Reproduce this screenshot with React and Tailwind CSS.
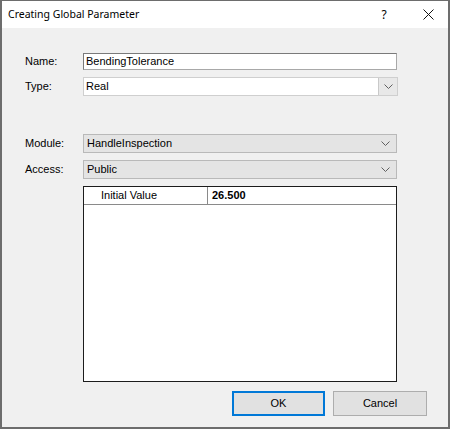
import React from 'react';

const Chevron = () => (
  <svg width="9" height="5" viewBox="0 0 9 5" className="block">
    <path d="M0.5 0.5 L4.5 4.5 L8.5 0.5" fill="none" stroke="#606060" strokeWidth="1" />
  </svg>
);

const Label = ({ children }) => (
  <div className="w-[58px] text-[11px] text-black">{children}</div>
);

const ComboRow = ({ label, value, mt }) => (
  <div className={`flex items-center ${mt}`}>
    <Label>{label}</Label>
    <div className="flex h-[19px] w-[314px] items-center justify-between border border-[#b9b9b9] bg-[#e4e4e4] pl-[3px] pr-[6px] text-[11px] text-black">
      <span>{value}</span>
      <Chevron />
    </div>
  </div>
);

export default function App() {
  return (
    <div
      className="flex h-[429px] w-[450px] flex-col border-x-[2px] border-b-[2px] border-t border-[#6d6d6d] bg-[#f0f0f0]"
      style={{ fontFamily: '"Liberation Sans", Arial, sans-serif' }}
    >
      {/* title bar */}
      <div className="flex h-[27px] items-center bg-white pl-[6px] text-[10.5px] text-black" style={{ fontFamily: '"Noto Sans", sans-serif' }}>
        <span className="flex-1">Creating Global Parameter</span>
        <span className="w-[48px] text-center text-[12px]">?</span>
        <span className="flex w-[40px] justify-center">
          <svg width="11" height="11" viewBox="0 0 11 11">
            <path d="M0.5 0.5 L10.5 10.5 M10.5 0.5 L0.5 10.5" stroke="#111" strokeWidth="1" />
          </svg>
        </span>
      </div>

      <div className="flex flex-1 flex-col pl-[23px] pt-[25px]">
        {/* Name */}
        <div className="flex items-center">
          <Label>Name:</Label>
          <div className="flex h-[17px] w-[314px] items-center border border-[#a8a8a8] border-t-[#7a7a7a] border-l-[#7a7a7a] bg-white pl-[2px] text-[11px] text-black">
            BendingTolerance
          </div>
        </div>
        {/* Type */}
        <div className="mt-[7px] flex items-center">
          <Label>Type:</Label>
          <div className="flex h-[19px] w-[315px] border border-[#cfcfcf] bg-white text-[11px] text-black">
            <div className="flex flex-1 items-center pl-[2px]">Real</div>
            <div className="flex w-[19px] items-center justify-center border-l border-[#c9c9c9] bg-[#e8e8e8]">
              <Chevron />
            </div>
          </div>
        </div>

        <ComboRow label="Module:" value="HandleInspection" mt="mt-[38px]" />
        <ComboRow label="Access:" value="Public" mt="mt-[7px]" />

        {/* table */}
        <div className="ml-[58px] mt-[7px] flex h-[196px] w-[314px] flex-col border border-[#1c1c1c] bg-white text-[11px] text-black">
          <div className="flex h-[18px] border-b border-[#8a8a8a]">
            <div className="flex w-[124px] items-center border-r border-[#8a8a8a] pl-[17px]">Initial Value</div>
            <div className="flex flex-1 items-center pl-[4px] font-bold">26.500</div>
          </div>
        </div>

        {/* buttons */}
        <div className="mt-[9px] flex justify-end gap-[8px] pr-[21px] text-[11px] text-black">
          <button className="h-[25px] w-[93px] border-2 border-[#0078d7] bg-[#e1e1e1]">OK</button>
          <button className="h-[25px] w-[94px] border border-[#adadad] bg-[#e1e1e1]">Cancel</button>
        </div>
      </div>
    </div>
  );
}
